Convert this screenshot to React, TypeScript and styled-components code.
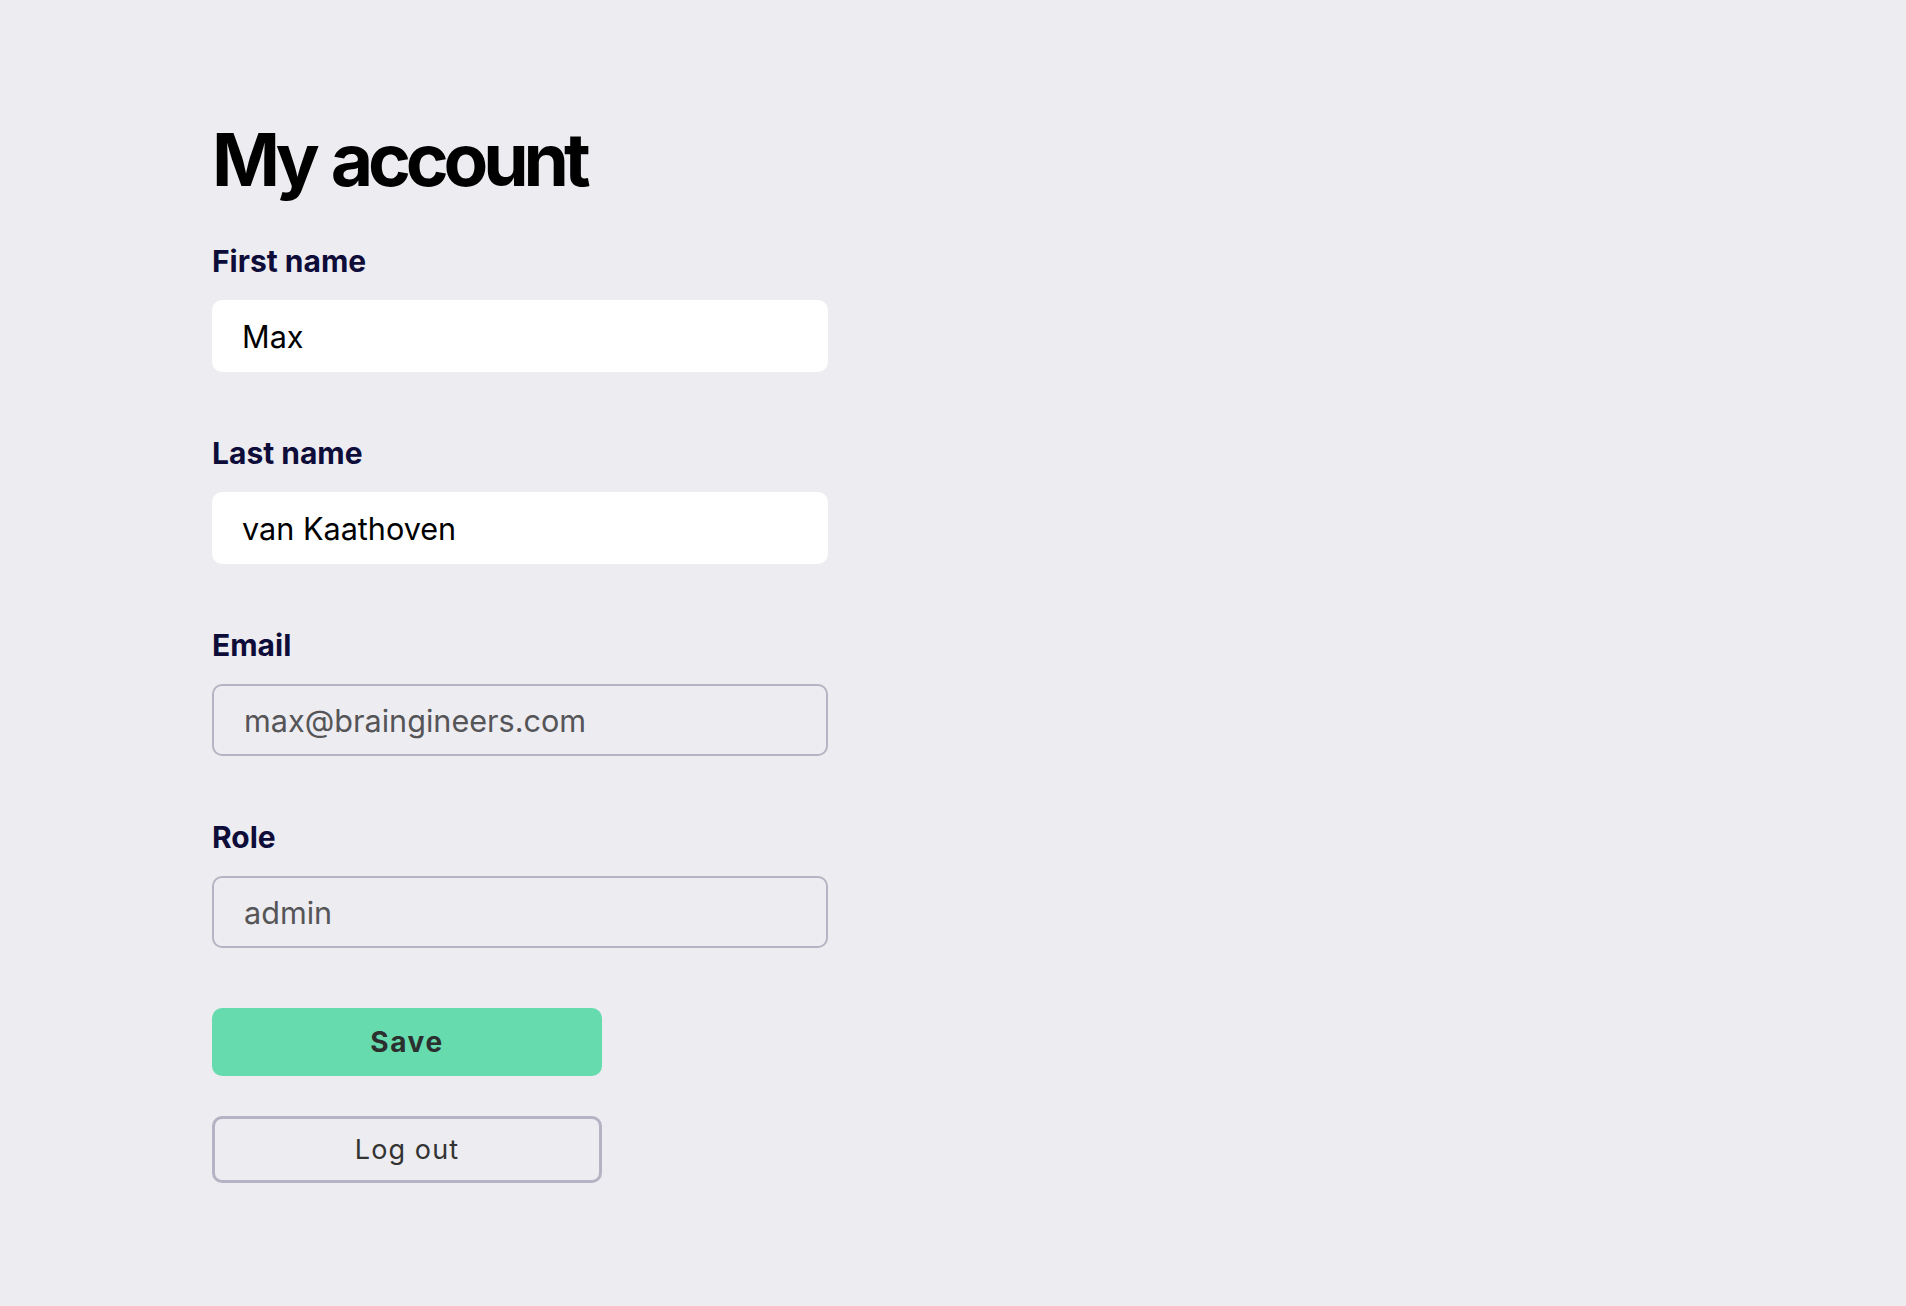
import React from "react";
import styled, { createGlobalStyle } from "styled-components";

const GlobalStyle = createGlobalStyle`
  html, body {
    margin: 0;
    padding: 0;
    background: #edecf1;
  }
  body {
    font-family: Inter, "Noto Sans", "Liberation Sans", sans-serif;
    min-height: 1306px;
  }
  * { box-sizing: border-box; }
`;

const Page = styled.main`
  padding: 123px 0 0 212px;
  display: flex;
  flex-direction: column;
`;

const Title = styled.h1`
  margin: 0 0 50px;
  font-size: 73px;
  line-height: 1;
  font-weight: 700;
  letter-spacing: -0.07em;
  word-spacing: 4px;
  color: #000;
`;

const Form = styled.form`
  display: flex;
  flex-direction: column;
  width: 616px;
`;

const Fields = styled.div`
  display: flex;
  flex-direction: column;
  gap: 66px;
  margin-bottom: 60px;
`;

const Field = styled.div`
  display: flex;
  flex-direction: column;
  gap: 24px;
`;

const Label = styled.label`
  font-size: 30px;
  line-height: 1;
  font-weight: 700;
  letter-spacing: 0;
  color: #0e0d3a;
`;

const Input = styled.input<{ $readOnly?: boolean }>`
  height: 72px;
  width: 100%;
  border-radius: 10px;
  border: 2px solid ${(p) => (p.$readOnly ? "#b5b4c3" : "#ffffff")};
  background: ${(p) => (p.$readOnly ? "#edecf1" : "#ffffff")};
  color: ${(p) => (p.$readOnly ? "#555558" : "#000000")};
  padding: 0 ${(p) => (p.$readOnly ? "30px" : "28px")};
  font-family: Inter, "Noto Sans", "Liberation Sans", sans-serif;
  font-size: 30.6px;
  outline: none;
`;

const Buttons = styled.div`
  display: flex;
  flex-direction: column;
  gap: 40px;
  width: 390px;
`;

const SaveButton = styled.button`
  height: 68px;
  border: none;
  border-radius: 10px;
  background: #66dbae;
  color: #2b2f2e;
  font-family: Inter, "Noto Sans", "Liberation Sans", sans-serif;
  font-size: 28px;
  font-weight: 700;
  letter-spacing: 1.6px;
  cursor: pointer;
`;

const LogoutButton = styled.button`
  height: 67px;
  border: 3px solid #b4b3c3;
  border-radius: 10px;
  background: transparent;
  color: #333333;
  font-family: Inter, "Noto Sans", "Liberation Sans", sans-serif;
  font-size: 27px;
  font-weight: 400;
  letter-spacing: 1.1px;
  cursor: pointer;
`;

type FieldDef = { id: string; label: string; value: string; readOnly?: boolean };

const fields: FieldDef[] = [
  { id: "first", label: "First name", value: "Max" },
  { id: "last", label: "Last name", value: "van Kaathoven" },
  { id: "email", label: "Email", value: "max@braingineers.com", readOnly: true },
  { id: "role", label: "Role", value: "admin", readOnly: true },
];

export default function App() {
  return (
    <>
      <GlobalStyle />
      <Page>
        <Title>My account</Title>
        <Form onSubmit={(e) => e.preventDefault()}>
          <Fields>
            {fields.map((f) => (
              <Field key={f.id}>
                <Label htmlFor={f.id}>{f.label}</Label>
                <Input
                  id={f.id}
                  defaultValue={f.value}
                  readOnly={f.readOnly}
                  $readOnly={f.readOnly}
                />
              </Field>
            ))}
          </Fields>
          <Buttons>
            <SaveButton type="submit">Save</SaveButton>
            <LogoutButton type="button">Log out</LogoutButton>
          </Buttons>
        </Form>
      </Page>
    </>
  );
}
